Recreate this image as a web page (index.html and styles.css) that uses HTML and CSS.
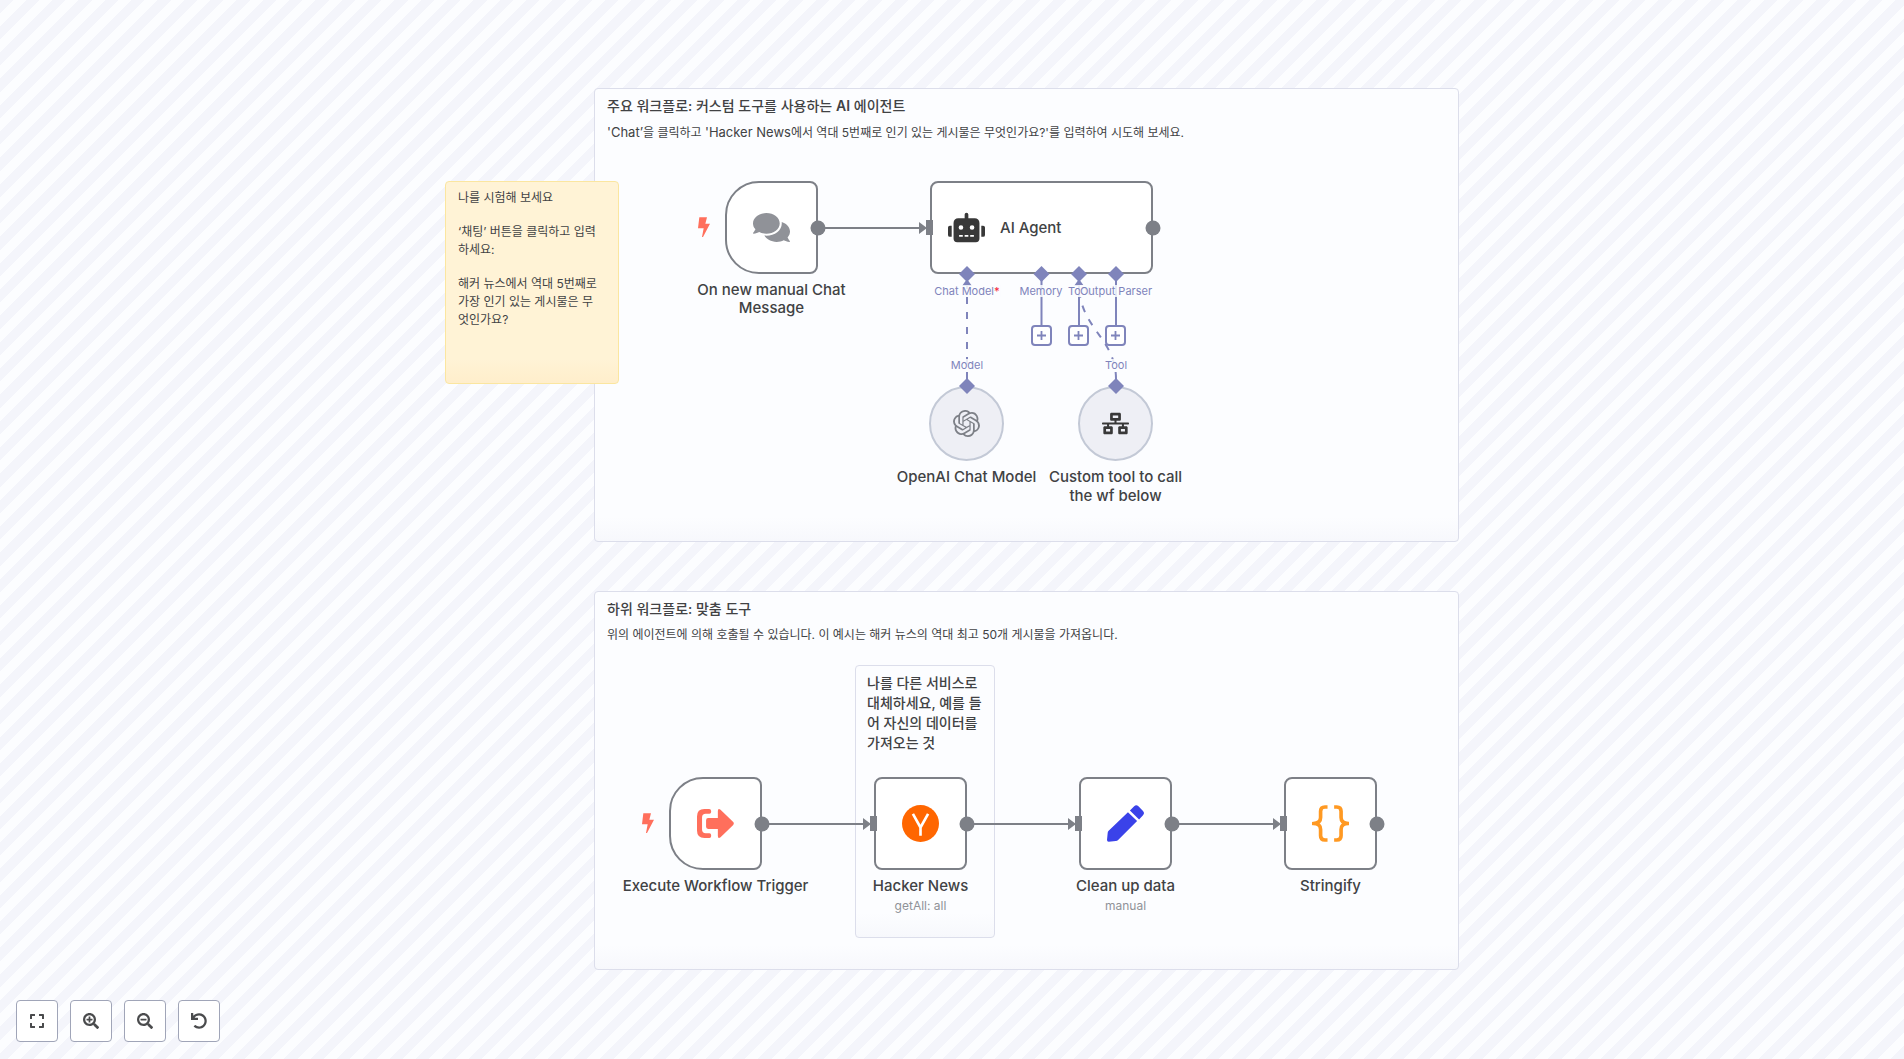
FILE: index.html
```html
<!DOCTYPE html>
<html lang="ko">
<head>
<meta charset="utf-8">
<title>Workflow</title>
<link rel="stylesheet" href="styles.css">
</head>
<body>
<main class="canvas">
  <section class="sticky sticky-main">
    <h2>주요 워크플로: 커스텀 도구를 사용하는 <b>AI</b> 에이전트</h2>
    <p><span lang="en">'Chat’</span>을 클릭하고 <span lang="en">'Hacker News</span>에서 역대 5번째로 인기 있는 게시물은 무엇인가요?'를 입력하여 시도해 보세요.</p>
  </section>
  <section class="sticky sticky-sub">
    <h2>하위 워크플로: 맞춤 도구</h2>
    <p>위의 에이전트에 의해 호출될 수 있습니다. 이 예시는 해커 뉴스의 역대 최고 50개 게시물을 가져옵니다.</p>
  </section>
  <section class="sticky sticky-replace">
    <h2>나를 다른 서비스로 대체하세요, 예를 들어 자신의 데이터를 가져오는 것</h2>
  </section>
  <section class="sticky sticky-try">
    <p>나를 시험해 보세요</p>
    <p>‘채팅’ 버튼을 클릭하고 입력하세요:</p>
    <p>해커 뉴스에서 역대 5번째로 가장 인기 있는 게시물은 무엇인가요?</p>
  </section>

  <article class="node node-chat">
    <div class="box trigger">
      <svg class="icon-l" viewBox="0 0 576 512" fill="#909298"><path d="M416 192c0-88.400-93.100-160-208-160S0 103.600 0 192c0 34.300 14.100 65.900 38 92-13.400 30.200-35.500 54.200-35.800 54.500-2.200 2.300-2.800 5.700-1.500 8.700S4.800 352 8 352c36.600 0 66.900-12.300 88.700-25 32.200 15.700 70.300 25 111.300 25 114.900 0 208-71.600 208-160zm122 220c23.900-26 38-57.700 38-92 0-66.900-53.500-124.200-129.300-148.100.9 6.600 1.300 13.300 1.300 20.100 0 105.900-107.700 192-240 192-10.800 0-21.300-.8-31.700-1.900C207.800 439.600 281.800 480 368 480c41 0 79.100-9.200 111.300-25 21.800 12.700 52.100 25 88.700 25 3.200 0 6.100-1.900 7.300-4.800 1.300-2.900.7-6.300-1.500-8.700-.3-.3-22.400-24.200-35.800-54.500z"/></svg>
      <svg class="bolt" viewBox="0 0 36 60"><path d="M4 1h23l-5 19h14L15 60h-3l5-26H0z"/></svg>
    </div>
    <h3>On new manual Chat Message</h3>
  </article>

  <article class="node node-agent">
    <div class="box agent">
      <svg class="icon-l" viewBox="0 0 640 512" fill="#383838"><path d="M32,224H64V416H32A32,32,0,0,1,0,384V256A32,32,0,0,1,32,224Zm512-48V448a64,64,0,0,1-64,64H160a64,64,0,0,1-64-64V176a80,80,0,0,1,80-80H288V32a32,32,0,0,1,64,0V96H464A80,80,0,0,1,544,176ZM264,256a40,40,0,1,0-40,40A40,40,0,0,0,264,256Zm-8,128H192v32h64Zm96,0H288v32h64ZM456,256a40,40,0,1,0-40,40A40,40,0,0,0,456,256Zm-8,128H384v32h64ZM640,256V384a32,32,0,0,1-32,32H576V224h32A32,32,0,0,1,640,256Z"/></svg>
      <h3>AI Agent</h3>
    </div>
  </article>

  <article class="node node-model">
    <div class="box round">
      <svg class="icon-s" viewBox="0 0 24 24" fill="#7d8087"><path d="M22.2819 9.8211a5.9847 5.9847 0 0 0-.5157-4.9108 6.0462 6.0462 0 0 0-6.5098-2.9A6.0651 6.0651 0 0 0 4.9807 4.1818a5.9847 5.9847 0 0 0-3.9977 2.9 6.0462 6.0462 0 0 0 .7427 7.0966 5.98 5.98 0 0 0 .511 4.9107 6.051 6.051 0 0 0 6.5146 2.9001A5.9847 5.9847 0 0 0 13.2599 24a6.0557 6.0557 0 0 0 5.7718-4.2058 5.9894 5.9894 0 0 0 3.9977-2.9001 6.0557 6.0557 0 0 0-.7475-7.0729zm-9.022 12.6081a4.4755 4.4755 0 0 1-2.8764-1.0408l.1419-.0804 4.7783-2.7582a.7948.7948 0 0 0 .3927-.6813v-6.7369l2.02 1.1686a.071.071 0 0 1 .038.052v5.5826a4.504 4.504 0 0 1-4.4945 4.4944zm-9.6607-4.1254a4.4708 4.4708 0 0 1-.5346-3.0137l.142.0852 4.783 2.7582a.7712.7712 0 0 0 .7806 0l5.8428-3.3685v2.3324a.0804.0804 0 0 1-.0332.0615L9.74 19.9502a4.4992 4.4992 0 0 1-6.1408-1.6464zM2.3408 7.8956a4.485 4.485 0 0 1 2.3655-1.9728V11.6a.7664.7664 0 0 0 .3879.6765l5.8144 3.3543-2.0201 1.1685a.0757.0757 0 0 1-.071 0l-4.8303-2.7865A4.504 4.504 0 0 1 2.3408 7.872zm16.5963 3.8558L13.1038 8.364 15.1192 7.2a.0757.0757 0 0 1 .071 0l4.8303 2.7913a4.4944 4.4944 0 0 1-.6765 8.1042v-5.6772a.79.79 0 0 0-.407-.667zm2.0107-3.0231l-.142-.0852-4.7735-2.7818a.7759.7759 0 0 0-.7854 0L9.409 9.2297V6.8974a.0662.0662 0 0 1 .0284-.0615l4.8303-2.7866a4.4992 4.4992 0 0 1 6.6802 4.66zM8.3065 12.863l-2.02-1.1638a.0804.0804 0 0 1-.038-.0567V6.0742a4.4992 4.4992 0 0 1 7.3757-3.4537l-.142.0805L8.704 5.459a.7948.7948 0 0 0-.3927.6813zm1.0976-2.3654l2.602-1.4998 2.6069 1.4998v2.9994l-2.5974 1.4997-2.6067-1.4997Z"/></svg>
    </div>
    <h3>OpenAI Chat Model</h3>
  </article>

  <article class="node node-tool">
    <div class="box round">
      <svg class="icon-s" viewBox="0 0 640 512" fill="#383838"><path d="M640 264v-16c0-8.840-7.160-16-16-16H344v-40h72c17.670 0 32-14.330 32-32V32c0-17.670-14.330-32-32-32H224c-17.670 0-32 14.330-32 32v128c0 17.670 14.330 32 32 32h72v40H16c-8.840 0-16 7.160-16 16v16c0 8.840 7.160 16 16 16h104v40H64c-17.670 0-32 14.330-32 32v128c0 17.670 14.330 32 32 32h160c17.670 0 32-14.330 32-32V352c0-17.670-14.330-32-32-32h-56v-40h304v40h-56c-17.670 0-32 14.330-32 32v128c0 17.670 14.330 32 32 32h160c17.670 0 32-14.330 32-32V352c0-17.670-14.330-32-32-32h-56v-40h104c8.840 0 16-7.160 16-16zM256 128V64h128v64H256zm-64 320H96v-64h96v64zm352 0h-96v-64h96v64z"/></svg>
    </div>
    <h3>Custom tool to call the wf below</h3>
  </article>

  <article class="node node-execute">
    <div class="box trigger">
      <svg class="icon-l" viewBox="0 0 110 110" fill="#ff6f5c"><path d="M36 12a6 6 0 0 1 6 6v3a5 5 0 0 1-5 5h-11q-11 0-11 11v36q0 11 11 11h11a5 5 0 0 1 5 5v4a5 5 0 0 1-5 5H22Q0 98 0 76V34Q0 12 22 12z"/><path d="M33 39h29V18q0-9 8-4l37 36q5 5 0 10L70 96q-8 5-8-4V71H33q-6 0-6-6V45q0-6 6-6z"/></svg>
      <svg class="bolt" viewBox="0 0 36 60"><path d="M4 1h23l-5 19h14L15 60h-3l5-26H0z"/></svg>
    </div>
    <h3>Execute Workflow Trigger</h3>
  </article>

  <article class="node node-hn">
    <div class="box">
      <svg class="icon-l" viewBox="0 0 112 112"><circle cx="56" cy="56" r="56" fill="#ff6600"/><path d="M33 27l23 41 23-41M56 66v27" fill="none" stroke="#fff" stroke-width="8"/></svg>
    </div>
    <h3>Hacker News</h3>
    <p>getAll: all</p>
  </article>

  <article class="node node-clean">
    <div class="box">
      <svg class="icon-l" viewBox="0 0 113 113" fill="#3a42e9"><path d="M64 22l28 27-58 58q-3 3-7 3l-22 2q-5 0-5-5l2-21q0-4 3-7zM70 17l13-13q6-6 13 0l14 14q6 7 0 13L98 44z"/></svg>
    </div>
    <h3>Clean up data</h3>
    <p>manual</p>
  </article>

  <article class="node node-stringify">
    <div class="box">
      <svg class="icon-l" viewBox="0 0 112 112" fill="none" stroke="#ff9922" stroke-width="11" stroke-linejoin="round"><path d="M47 6h-8q-13 0-13 13v19q0 18-22 18 22 0 22 18v19q0 13 13 13h8M67 6h8q13 0 13 13v19q0 18 22 18-22 0-22 18v19q0 13-13 13h-8"/></svg>
    </div>
    <h3>Stringify</h3>
  </article>

  <svg class="edges" width="1904" height="1059">
    <g class="main-line">
      <path d="M818 228H922M762 824H866M967 824H1071M1172 824H1276"/>
    </g>
    <g class="main-shape">
      <path d="M919 222l8 6-8 6zM863 818l8 6-8 6zM1068 818l8 6-8 6zM1273 818l8 6-8 6z"/>
      <path d="M926 220h7v15h-7zM870 816h7v15h-7zM1075 816h7v15h-7zM1280 816h7v15h-7z"/>
      <circle cx="818" cy="228" r="7.500"/><circle cx="1153" cy="228" r="7.500"/>
      <circle cx="762" cy="824" r="7.500"/><circle cx="967" cy="824" r="7.500"/><circle cx="1172" cy="824" r="7.500"/><circle cx="1377" cy="824" r="7.500"/>
    </g>
    <g class="ai-line">
      <path d="M1041.500 278V326M1079 278V326M1116 278V326"/>
      <path class="dashed" d="M967 379V284M1116 379C1116 338 1079 328 1079 284"/>
    </g>
    <g class="ai-shape">
      <path d="M967 266l8 8-8 8-8-8zM1041.500 266l8 8-8 8-8-8zM1079 266l8 8-8 8-8-8zM1116 266l8 8-8 8-8-8zM967 378l8 8-8 8-8-8zM1116 378l8 8-8 8-8-8z"/>
      <path d="M967 279l5 7h-10zM1079 279l5 7h-10z"/>
    </g>
  </svg>

  <span class="port port-chat">Chat Model<b>*</b></span>
  <span class="port port-memory">Memory</span>
  <span class="port port-tool">Tool</span>
  <span class="port port-parser">Output Parser</span>
  <span class="port port-model">Model</span>
  <span class="port port-tool-out">Tool</span>

  <button class="add add-memory" aria-label="Add memory"><svg viewBox="0 0 10 10"><path d="M5 0v10M0 5h10"/></svg></button>
  <button class="add add-tool" aria-label="Add tool"><svg viewBox="0 0 10 10"><path d="M5 0v10M0 5h10"/></svg></button>
  <button class="add add-parser" aria-label="Add output parser"><svg viewBox="0 0 10 10"><path d="M5 0v10M0 5h10"/></svg></button>

  <nav class="controls">
    <button aria-label="Fit view"><svg viewBox="0 0 448 512"><path d="M0 180V56c0-13.300 10.700-24 24-24h124c6.600 0 12 5.400 12 12v40c0 6.600-5.400 12-12 12H64v84c0 6.600-5.400 12-12 12H12c-6.600 0-12-5.400-12-12zM288 44v40c0 6.600 5.400 12 12 12h84v84c0 6.600 5.400 12 12 12h40c6.600 0 12-5.400 12-12V56c0-13.300-10.700-24-24-24H300c-6.600 0-12 5.400-12 12zm148 276h-40c-6.600 0-12 5.400-12 12v84h-84c-6.600 0-12 5.400-12 12v40c0 6.600 5.400 12 12 12h124c13.300 0 24-10.700 24-24V332c0-6.600-5.400-12-12-12zM160 468v-40c0-6.600-5.400-12-12-12H64v-84c0-6.600-5.400-12-12-12H12c-6.600 0-12 5.400-12 12v124c0 13.300 10.700 24 24 24h124c6.600 0 12-5.400 12-12z"/></svg></button>
    <button aria-label="Zoom in"><svg viewBox="0 0 512 512"><path d="M304 192v32c0 6.600-5.400 12-12 12h-56v56c0 6.600-5.400 12-12 12h-32c-6.600 0-12-5.400-12-12v-56h-56c-6.600 0-12-5.400-12-12v-32c0-6.600 5.400-12 12-12h56v-56c0-6.600 5.400-12 12-12h32c6.600 0 12 5.400 12 12v56h56c6.600 0 12 5.400 12 12zm201 284.700L476.700 505c-9.400 9.400-24.600 9.400-33.900 0L343 405.300c-4.500-4.500-7-10.600-7-17V372c-35.300 27.600-79.700 44-128 44C93.100 416 0 322.900 0 208S93.100 0 208 0s208 93.100 208 208c0 48.300-16.400 92.700-44 128h16.300c6.400 0 12.500 2.500 17 7l99.700 99.700c9.300 9.400 9.300 24.600 0 34zM344 208c0-75.200-60.800-136-136-136S72 132.800 72 208s60.800 136 136 136 136-60.800 136-136z"/></svg></button>
    <button aria-label="Zoom out"><svg viewBox="0 0 512 512"><path d="M304 192v32c0 6.600-5.400 12-12 12H124c-6.600 0-12-5.400-12-12v-32c0-6.600 5.400-12 12-12h168c6.600 0 12 5.400 12 12zm201 284.700L476.700 505c-9.400 9.400-24.600 9.400-33.900 0L343 405.300c-4.500-4.500-7-10.600-7-17V372c-35.300 27.600-79.700 44-128 44C93.100 416 0 322.900 0 208S93.100 0 208 0s208 93.100 208 208c0 48.300-16.400 92.700-44 128h16.300c6.400 0 12.500 2.500 17 7l99.700 99.700c9.300 9.400 9.300 24.600 0 34zM344 208c0-75.200-60.800-136-136-136S72 132.800 72 208s60.800 136 136 136 136-60.800 136-136z"/></svg></button>
    <button aria-label="Reset zoom"><svg viewBox="0 0 512 512"><path d="M212.333 224.333H12c-6.627 0-12-5.373-12-12V12C0 5.373 5.373 0 12 0h48c6.627 0 12 5.373 12 12v78.112C117.773 39.279 184.260 7.470 258.175 8.007c136.906.994 246.448 111.623 246.157 248.532C504.041 393.258 393.120 504 256.333 504c-64.089 0-122.496-24.313-166.510-64.215-5.099-4.622-5.334-12.554-.467-17.420l33.967-33.967c4.474-4.474 11.662-4.717 16.401-.525C170.760 415.336 211.580 432 256.333 432c97.268 0 176-78.716 176-176 0-97.267-78.716-176-176-176-58.496 0-110.280 28.476-142.274 72.333h98.274c6.627 0 12 5.373 12 12v48c0 6.627-5.373 12-12 12z"/></svg></button>
  </nav>
</main>
</body>
</html>
```
FILE: styles.css
```css
* { box-sizing: border-box; }

body {
  margin: 0;
  color: #414244;
  font-family: Inter, "Noto Sans CJK KR", sans-serif;
}

h2, h3, p { margin: 0; }

/* Each square tile holds six pairs of diagonal stripes */
.canvas {
  position: relative;
  min-height: 100vh;
  overflow: hidden;
  background: repeating-linear-gradient(135deg, #f4f5fb 0 calc(100% / 12), #fcfdff calc(100% / 12) calc(100% / 6));
  background-size: 79px 79px;
}

/* Sticky notes */
.sticky {
  position: absolute;
  display: flex;
  flex-direction: column;
  padding: 7px 12px;
  border: 1px solid #dcdeeb;
  border-radius: 4px;
  background: linear-gradient(#fcfdff calc(100% - 24px), #f7f8fc);
}
.sticky h2 { font-size: 14px; line-height: 20px; font-weight: 500; }
.sticky h2 b { font-weight: 600; }
.sticky p { font-size: 12px; line-height: 18px; }
.sticky p [lang="en"] { font-size: 13px; }
.sticky h2 + p { margin-top: 7px; }
.sticky-main { left: 594px; top: 88px; width: 865px; height: 454px; }
.sticky-sub { left: 594px; top: 591px; width: 865px; height: 379px; }
.sticky-replace { left: 855px; top: 665px; width: 140px; height: 273px; padding: 7px 11px; }
.sticky-try {
  left: 445px; top: 181px; width: 174px; height: 203px;
  gap: 16px;
  padding-right: 19px;
  border-color: #fbe6a0;
  background: linear-gradient(#fff3d6 calc(100% - 24px), #ffeecb);
}

/* Nodes */
.node {
  position: absolute;
  display: flex;
  flex-direction: column;
  align-items: center;
  width: 185px;
  text-align: center;
}
.node h3 { font-size: 15px; line-height: 18px; font-weight: 500; }
.node .box + h3 { margin-top: 7px; }
.node .round + h3 { margin-top: 6px; line-height: 19px; }
.node p { margin-top: 2px; font-size: 12px; line-height: 18px; color: #909298; }
.node-chat { left: 679px; top: 181px; }
.node-agent { left: 930px; top: 181px; width: 223px; }
.node-model { left: 892px; top: 386px; width: 149px; }
.node-tool { left: 1041px; top: 386px; width: 149px; }
.node-execute { left: 623px; top: 777px; }
.node-execute h3 { white-space: nowrap; }
.node-hn { left: 828px; top: 777px; }
.node-clean { left: 1033px; top: 777px; }
.node-stringify { left: 1238px; top: 777px; }

.box {
  position: relative;
  display: flex;
  align-items: center;
  justify-content: center;
  width: 93px;
  height: 93px;
  border: 2px solid #7d8087;
  border-radius: 8px;
  background: #fff;
}
.trigger { border-radius: 34px 8px 8px 34px; }
.agent { width: 100%; justify-content: flex-start; gap: 15px; padding-left: 16px; }
.round { width: 75px; height: 75px; border-color: #c3c9d6; border-radius: 50%; background: #eeeff5; }
.icon-l { width: 37px; height: 37px; }
.icon-s { width: 27px; height: 27px; }
.bolt { position: absolute; left: -29px; top: 34px; width: 12px; height: 20px; fill: #ff6f5c; }

/* Connections */
.edges { position: absolute; left: 0; top: 0; pointer-events: none; }
.main-line { fill: none; stroke: #7d8087; stroke-width: 2; }
.main-shape { fill: #7d8087; }
.ai-line { fill: none; stroke: #7f84bb; stroke-width: 2; }
.ai-shape { fill: #7f84bb; }
.dashed { stroke-dasharray: 7 8; }

.port {
  position: absolute;
  transform: translateX(-50%);
  font-size: 11px;
  line-height: 12px;
  white-space: nowrap;
  color: #7f84bb;
  background: rgba(252, 253, 255, 0.85);
}
.port b { color: #f5293d; font-weight: 500; }
.port-chat { left: 967px; top: 285px; }
.port-memory { left: 1041px; top: 285px; }
.port-tool { left: 1079px; top: 285px; }
.port-parser { left: 1116px; top: 285px; }
.port-model { left: 967px; top: 359px; }
.port-tool-out { left: 1116px; top: 359px; }

.add {
  position: absolute;
  top: 325px;
  display: flex;
  align-items: center;
  justify-content: center;
  width: 21px;
  height: 21px;
  padding: 0;
  border: 2px solid #7f84bb;
  border-radius: 4px;
  background: #fff;
}
.add svg { width: 9px; height: 9px; fill: none; stroke: #7f84bb; stroke-width: 2; }
.add-memory { left: 1031px; }
.add-tool { left: 1068px; }
.add-parser { left: 1105px; }

/* View controls */
.controls { position: absolute; left: 16px; bottom: 17px; display: flex; gap: 12px; }
.controls button {
  display: flex;
  align-items: center;
  justify-content: center;
  width: 42px;
  height: 42px;
  padding: 0;
  border: 1px solid #a0a5b8;
  border-radius: 4px;
  background: #fff;
}
.controls svg { width: 16px; height: 16px; fill: #4a4b4d; }
```
